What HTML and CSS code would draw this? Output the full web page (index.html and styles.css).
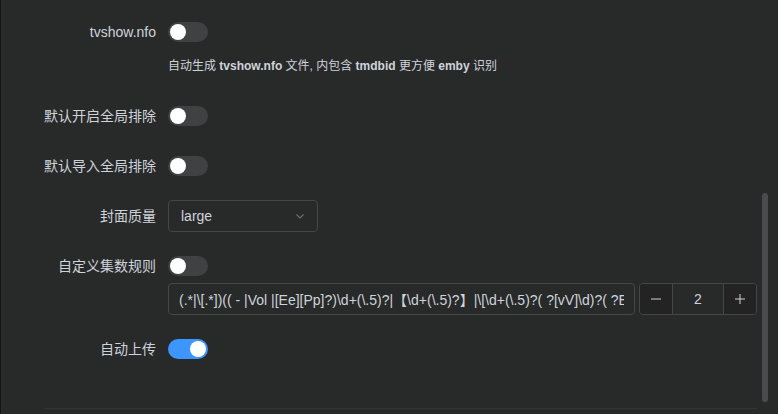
FILE: index.html
```html
<!DOCTYPE html>
<html lang="zh">
<head>
<meta charset="utf-8">
<link rel="stylesheet" href="styles.css">
</head>
<body>
<div class="page">
  <div class="form">
    <div class="item">
      <div class="label">tvshow.nfo</div>
      <div class="content">
        <div class="line"><span class="switch"></span></div>
        <div class="desc">自动生成 <b>tvshow.nfo</b> 文件, 内包含 <b>tmdbid</b> 更方便 <b>emby</b> 识别</div>
      </div>
    </div>
    <div class="item">
      <div class="label">默认开启全局排除</div>
      <div class="content"><div class="line"><span class="switch"></span></div></div>
    </div>
    <div class="item">
      <div class="label">默认导入全局排除</div>
      <div class="content"><div class="line"><span class="switch"></span></div></div>
    </div>
    <div class="item">
      <div class="label">封面质量</div>
      <div class="content">
        <div class="select">
          <span>large</span>
          <svg class="chev" width="12" height="12" viewBox="0 0 12 12"><path d="M2.5 4.5 L6 8 L9.5 4.5" fill="none" stroke="#6c6e72" stroke-width="1.1"/></svg>
        </div>
      </div>
    </div>
    <div class="item">
      <div class="label">自定义集数规则</div>
      <div class="content">
        <div class="line"><span class="switch"></span></div>
        <div class="rule-row">
          <input class="rule-input" type="text" value="(.*|\[.*])(( - |Vol |[Ee][Pp]?)\d+(\.5)?|【\d+(\.5)?】|\[\d+(\.5)?( ?[vV]\d)?( ?END)?\])(.*)">
          <div class="number">
            <span class="btn"><svg width="12" height="12" viewBox="0 0 12 12"><path d="M1 6 H11" stroke="#cfd3dc" stroke-width="1"/></svg></span>
            <span class="val">2</span>
            <span class="btn"><svg width="12" height="12" viewBox="0 0 12 12"><path d="M1 6 H11 M6 1 V11" stroke="#cfd3dc" stroke-width="1"/></svg></span>
          </div>
        </div>
      </div>
    </div>
    <div class="item">
      <div class="label">自动上传</div>
      <div class="content"><div class="line"><span class="switch on"></span></div></div>
    </div>
  </div>
  <div class="scrollbar"></div>
</div>
</body>
</html>
```
FILE: styles.css
```css
* { box-sizing: border-box; }
html, body { margin: 0; padding: 0; background: #282a29; }
body {
  font-family: "Liberation Sans", "Noto Sans CJK SC", sans-serif;
  color: #cfd3dc;
}
.page {
  position: relative;
  width: 778px;
  height: 414px;
  overflow: hidden;
  background: #282a29;
  border-left: 1px solid #141515;
  padding: 16px 21px 0 43px;
}
.form {
  border-bottom: 1px solid #343636;
  padding-bottom: 43px;
}
.item {
  display: grid;
  grid-template-columns: 112px 1fr;
  column-gap: 12px;
  margin-bottom: 18px;
}
.item:last-child { margin-bottom: 0; }
.label {
  text-align: right;
  font-size: 14px;
  line-height: 32px;
  height: 32px;
  color: #cfd3dc;
  white-space: nowrap;
}
.content { min-width: 0; }
.line {
  height: 32px;
  display: flex;
  align-items: center;
}
.switch {
  position: relative;
  display: inline-block;
  width: 40px;
  height: 20px;
  border-radius: 10px;
  background: #404142;
}
.switch::after {
  content: "";
  position: absolute;
  top: 2px;
  left: 2px;
  width: 16px;
  height: 16px;
  border-radius: 50%;
  background: #fff;
}
.switch.on { background: #3d96fd; }
.switch.on::after { left: 22px; }
.desc {
  font-size: 12px;
  line-height: 20px;
  margin: 8px 0 6px;
  color: #cfd3dc;
}
.desc b { font-weight: 700; }
.select {
  width: 150px;
  height: 32px;
  border: 1px solid #444647;
  border-radius: 4px;
  display: flex;
  align-items: center;
  justify-content: space-between;
  padding: 0 11px 0 12px;
  font-size: 14px;
  color: #cfd3dc;
}
.rule-row {
  display: flex;
  gap: 4px;
  margin-top: 1px;
}
.rule-input {
  flex: 1;
  min-width: 0;
  height: 32px;
  border: 1px solid #444647;
  border-radius: 4px;
  background: transparent;
  color: #cfd3dc;
  font-family: "Liberation Sans", "Noto Sans CJK SC", sans-serif;
  font-size: 14px;
  padding: 0 10px;
  outline: none;
}
.number {
  width: 118px;
  height: 32px;
  border: 1px solid #444647;
  border-radius: 4px;
  display: flex;
  overflow: hidden;
}
.btn {
  width: 33px;
  display: flex;
  align-items: center;
  justify-content: center;
  background: #222322;
}
.btn:first-child { border-right: 1px solid #444647; }
.btn:last-child { border-left: 1px solid #444647; }
.val {
  flex: 1;
  display: flex;
  align-items: center;
  justify-content: center;
  font-size: 14px;
  color: #cfd3dc;
}
.scrollbar {
  position: absolute;
  left: 761px;
  top: 193px;
  width: 6px;
  height: 209px;
  border-radius: 3px;
  background: #4a4b4c;
}
```
